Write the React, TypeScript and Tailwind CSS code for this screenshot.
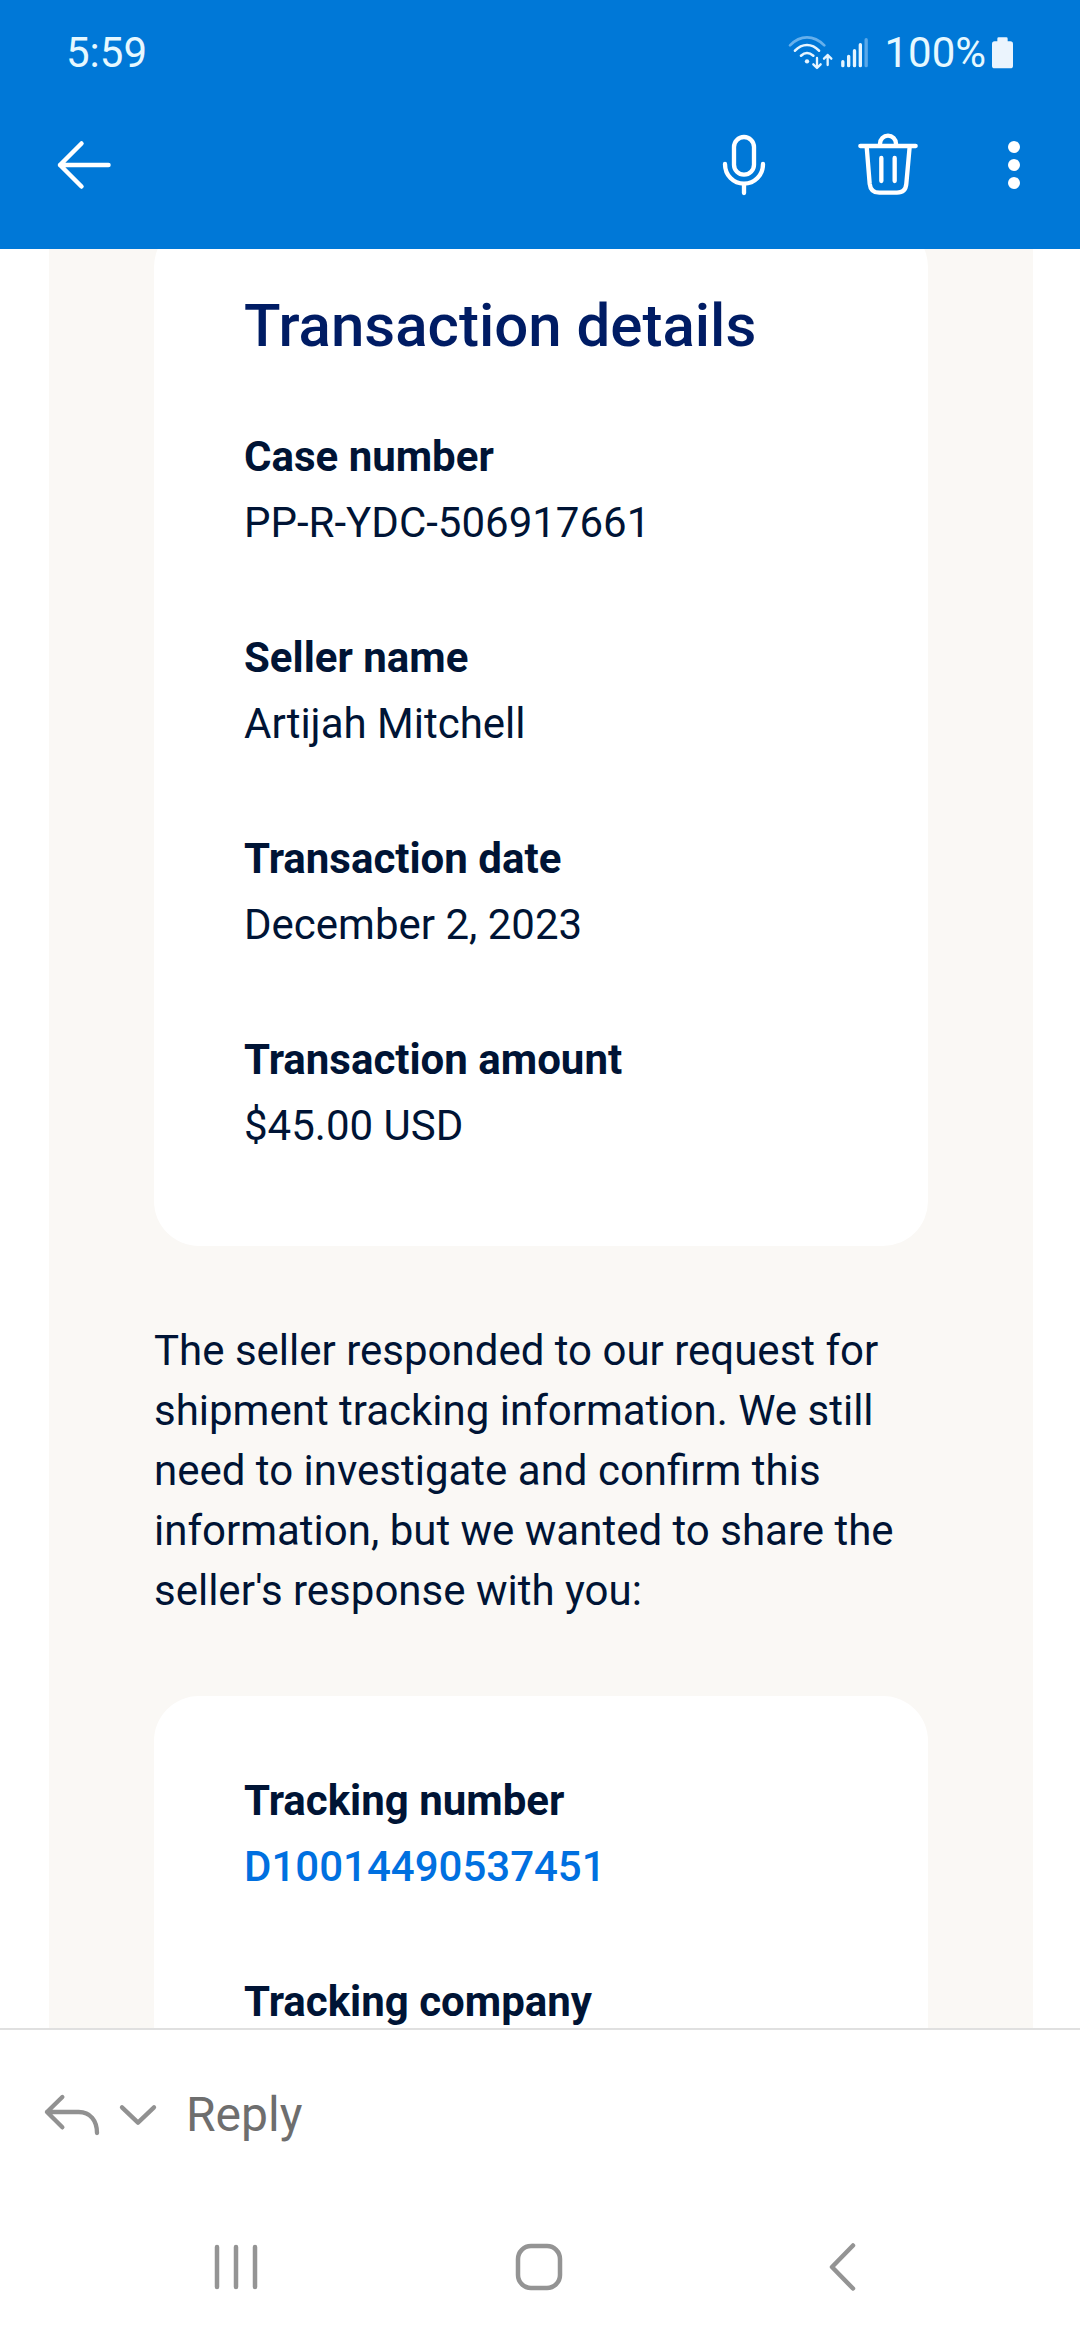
import type { ReactNode } from "react";

function WifiIcon() {
  return (
    <svg viewBox="321 102 135 105" className="h-[35px] w-[45px]" fill="none" stroke="#e6f5ff" strokeLinecap="round" strokeLinejoin="round" aria-hidden="true">
      <path d="M327 133Q350 109 378 109T430 133" stroke="#66b0ec" strokeWidth="8" />
      <path d="M342 149Q358 132 378 132T414 149" strokeWidth="8" />
      <path d="M360 164Q369 156 378 156T397 164" strokeWidth="8" />
      <circle cx="378" cy="181" r="6.500" fill="#e6f5ff" stroke="none" />
      <path d="M408 171V200M397 190L408 201L419 190M440 192V162M429 173L440 162L451 173" strokeWidth="7" />
    </svg>
  );
}

function SignalIcon() {
  return (
    <svg viewBox="483 108 81 93" className="h-[31px] w-[27px]" fill="none" stroke="#e6f5ff" strokeWidth="10" strokeLinecap="round" aria-hidden="true">
      <path d="M488.500 182V194M506 166V194M523.500 149V194M541 131V194" />
      <path d="M558.500 116V194" stroke="#58a8ea" />
    </svg>
  );
}

function BatteryIcon() {
  return (
    <svg viewBox="936 107 63 96" className="h-8 w-[21px]" fill="#ebf4fd" aria-hidden="true">
      <path d="M956 108H979Q983 108 983 112V120H991Q999 120 999 128V193Q999 201 991 201H944Q936 201 936 193V128Q936 120 944 120H952V112Q952 108 956 108Z" />
    </svg>
  );
}

function IconButton({ label, children, className = "" }: { label: string; children: ReactNode; className?: string }) {
  return (
    <button type="button" aria-label={label} className={`flex items-center justify-center ${className}`}>
      {children}
    </button>
  );
}

function Field({ label, children }: { label: string; children: ReactNode }) {
  return (
    <div className="flex flex-col gap-1.5">
      <dt className="font-bold">{label}</dt>
      <dd>{children}</dd>
    </div>
  );
}

const details = [
  { label: "Case number", value: "PP-R-YDC-506917661" },
  { label: "Seller name", value: "Artijah Mitchell" },
  { label: "Transaction date", value: "December 2, 2023" },
  { label: "Transaction amount", value: "$45.00 USD" },
];

export default function App() {
  return (
    <div className="flex h-screen flex-col bg-white font-['Roboto',sans-serif]">
      <header className="shrink-0 bg-[#0078d7] text-white">
        <div className="flex h-[81px] items-center justify-between pt-6 pr-[67px] pl-[66px] text-[42px] leading-[56px] text-[#e6f8ff]">
          <time>5:59</time>
          <div className="flex items-center">
            <WifiIcon />
            <span className="ml-2">
              <SignalIcon />
            </span>
            <span className="ml-4">100%</span>
            <span className="ml-1.5">
              <BatteryIcon />
            </span>
          </div>
        </div>
        <div className="flex h-[168px] items-center justify-between pr-9 pl-[54px]">
          <IconButton label="Back">
            <svg viewBox="0 0 60 60" className="size-[60px]" fill="none" stroke="currentColor" strokeWidth="4.500" strokeLinecap="round" strokeLinejoin="round">
              <path d="M27.500 8.500L6 30L27.500 51.500M6 30H54.500" />
            </svg>
          </IconButton>
          <div className="flex items-center">
            <IconButton label="Dictate" className="mr-[84px]">
              <svg viewBox="102 399 180 192" className="h-16 w-[60px]" fill="none" stroke="currentColor" strokeWidth="13" strokeLinecap="round">
                <rect x="162" y="411" width="60" height="113" rx="30" />
                <path d="M135 492C135 526 160 551 192 551S249 526 249 492M192 551V579" />
              </svg>
            </IconButton>
            <IconButton label="Delete" className="mr-[66px]">
              <svg viewBox="534 399 180 192" className="h-16 w-[60px]" fill="none" stroke="currentColor" strokeWidth="13" strokeLinecap="round">
                <path d="M600 438V431A24 24 0 0 1 648 431V438M541 438H707" />
                <path d="M560 440L569 551Q572 578 598 578H651Q677 578 679 551L689 440" />
                <path d="M604 474V543M644 474V543" />
              </svg>
            </IconButton>
            <IconButton label="More options">
              <svg viewBox="0 0 60 60" className="size-[60px]" fill="currentColor">
                <circle cx="30" cy="12" r="6" />
                <circle cx="30" cy="30" r="6" />
                <circle cx="30" cy="48" r="6" />
              </svg>
            </IconButton>
          </div>
        </div>
      </header>

      <main className="min-h-0 flex-1 overflow-hidden pr-[47px] pl-[49px]">
        <article className="-mt-[27px] bg-[#faf8f5] px-[105px] text-[42px] leading-[60px] text-[#001435]">
          <section className="rounded-[45px] bg-white px-[90px] pt-[68px] pb-[90px]">
            <h2 className="mb-[65px] text-[60px] leading-[72px] font-medium text-[#001c64]">Transaction details</h2>
            <dl className="flex flex-col gap-[75px]">
              {details.map((item) => (
                <Field key={item.label} label={item.label}>
                  {item.value}
                </Field>
              ))}
            </dl>
          </section>
          <p className="py-[75px]">
            The seller responded to our request for shipment tracking information. We still need to investigate and
            confirm this information, but we wanted to share the seller's response with you:
          </p>
          <section className="rounded-t-[45px] bg-white px-[90px] pt-[75px]">
            <dl className="flex flex-col gap-[75px]">
              <Field label="Tracking number">
                <a href="#tracking" className="font-medium text-[#0070e0]">
                  D10014490537451
                </a>
              </Field>
              <Field label="Tracking company">{null}</Field>
            </dl>
          </section>
        </article>
      </main>

      <footer className="shrink-0 border-t-2 border-[#e0e0e0] bg-white">
        <div className="flex h-[170px] items-center pl-[42px] text-[#919191]">
          <IconButton label="Reply to sender">
            <svg viewBox="126 216 180 138" className="h-[46px] w-[60px]" fill="none" stroke="currentColor" strokeWidth="13" strokeLinecap="round" strokeLinejoin="round">
              <path d="M187 231L141 276L187 322M141 276H236C271 276 291 302 291 339" />
            </svg>
          </IconButton>
          <IconButton label="Reply choices" className="ml-[15px]">
            <svg viewBox="351 216 126 138" className="h-[46px] w-[42px]" fill="none" stroke="currentColor" strokeWidth="13" strokeLinecap="round" strokeLinejoin="round">
              <path d="M366 262L414 308L462 262" />
            </svg>
          </IconButton>
          <button type="button" className="ml-[27px] text-[48px] leading-[56px] text-[#6e6e6e]">
            Reply
          </button>
        </div>
        <nav aria-label="System" className="grid h-[140px] grid-cols-3 pr-[87px] pb-[6px] pl-[85px] text-[#949494]">
          <IconButton label="Recent apps">
            <svg viewBox="0 0 54 54" className="size-[54px]" fill="none" stroke="currentColor" strokeWidth="4.500" strokeLinecap="round">
              <path d="M8 7V47M27 7V47M46 7V47" />
            </svg>
          </IconButton>
          <IconButton label="Home">
            <svg viewBox="0 0 54 54" className="size-[54px]" fill="none" stroke="currentColor" strokeWidth="4.500">
              <rect x="6" y="6" width="42" height="42" rx="13" />
            </svg>
          </IconButton>
          <IconButton label="Navigate back">
            <svg viewBox="0 0 54 54" className="size-[54px]" fill="none" stroke="currentColor" strokeWidth="4.500" strokeLinecap="round" strokeLinejoin="round">
              <path d="M38 5.500L17 27L38 48.500" />
            </svg>
          </IconButton>
        </nav>
      </footer>
    </div>
  );
}
